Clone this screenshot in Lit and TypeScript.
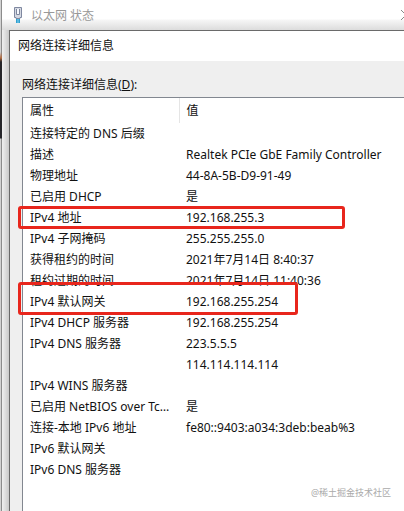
import { LitElement, html, css } from "lit";
import { customElement } from "lit/decorators.js";
import { classMap } from "lit/directives/class-map.js";

interface Row {
  name: string;
  value: string;
  mark?: "wide" | "tall";
}

const ROWS: Row[] = [
  { name: "连接特定的 DNS 后缀", value: "" },
  { name: "描述", value: "Realtek PCIe GbE Family Controller" },
  { name: "物理地址", value: "44-8A-5B-D9-91-49" },
  { name: "已启用 DHCP", value: "是" },
  { name: "IPv4 地址", value: "192.168.255.3", mark: "wide" },
  { name: "IPv4 子网掩码", value: "255.255.255.0" },
  { name: "获得租约的时间", value: "2021年7月14日 8:40:37" },
  { name: "租约过期的时间", value: "2021年7月14日 11:40:36" },
  { name: "IPv4 默认网关", value: "192.168.255.254", mark: "tall" },
  { name: "IPv4 DHCP 服务器", value: "192.168.255.254" },
  { name: "IPv4 DNS 服务器", value: "223.5.5.5" },
  { name: "", value: "114.114.114.114" },
  { name: "IPv4 WINS 服务器", value: "" },
  { name: "已启用 NetBIOS over Tcpip", value: "是" },
  { name: "连接-本地 IPv6 地址", value: "fe80::9403:a034:3deb:beab%3" },
  { name: "IPv6 默认网关", value: "" },
  { name: "IPv6 DNS 服务器", value: "" },
];

@customElement("app-root")
export class AppRoot extends LitElement {
  static styles = css`
    :host {
      position: relative;
      display: flex;
      min-height: 100vh;
      overflow: hidden;
      background: #fff;
      color: #111;
      font: 12px/21px "Noto Sans", "Noto Sans CJK SC", sans-serif;
    }
    .desktop {
      flex: none;
      width: 2px;
      background:
        linear-gradient(transparent 52px, #b06a40 58px, #26262a 62px 138px, transparent 139px),
        linear-gradient(90deg, #d2d2d2 1px, #8c8c8c 1px);
    }
    .status {
      flex: 1;
      min-width: 0;
      display: flex;
      flex-direction: column;
      background: linear-gradient(90deg, #f0f0f0, #c4c4c4 8px);
    }
    .titlebar {
      display: flex;
      align-items: center;
      height: 30px;
      padding-left: 10px;
      background: linear-gradient(#fff 19px, #f6f6f6 20px, #dcdcdc);
      color: #999;
    }
    .titlebar h1 {
      flex: 1;
    }
    .port {
      width: 12px;
      height: 18px;
      margin-right: 7px;
    }
    .close {
      flex: none;
      width: 12px;
      height: 20px;
      margin-right: -8px;
      padding: 0;
      border: 0;
      background: none;
    }
    .close svg {
      display: block;
    }
    h1,
    h2 {
      margin: 0;
      font: inherit;
    }
    .dialog {
      flex: 1;
      display: flex;
      flex-direction: column;
      margin-left: 7px;
      border: solid #6a6a6a;
      border-width: 1px 0 0 1px;
      background: #efefef;
    }
    .dialog h2 {
      height: 30px;
      padding-left: 8px;
      background: #fff;
      line-height: 30px;
    }
    .caption {
      padding: 13px 0 2px 12px;
    }
    .list {
      flex: 1;
      margin-left: 12px;
      border: solid #828790;
      border-width: 1px 0 0 1px;
      background: #fff;
    }
    table {
      width: 100%;
      table-layout: fixed;
      border-collapse: collapse;
    }
    .name {
      width: 156px;
    }
    th,
    td {
      height: 21px;
      padding: 0 0 0 7px;
      text-align: left;
      font-weight: 400;
      white-space: nowrap;
    }
    th {
      height: 25px;
    }
    th:first-child {
      border-right: 1px solid #e5e5e5;
    }
    td:first-child {
      overflow: hidden;
      text-overflow: ellipsis;
      padding-right: 3px;
    }
    .marked td:first-child {
      position: relative;
      overflow: visible;
    }
    .box {
      position: absolute;
      left: -5px;
      bottom: -1px;
      width: 321px;
      height: 17px;
      border: 3px solid #e8261c;
      border-radius: 3px;
      pointer-events: none;
    }
    .tall .box {
      bottom: -3px;
      width: 274px;
      height: 27px;
    }
    .watermark {
      position: absolute;
      right: 13px;
      bottom: 9px;
      color: #aaa;
      font-size: 9px;
      line-height: 18px;
    }
  `;

  private row(r: Row) {
    return html`<tr class=${classMap({ marked: !!r.mark, tall: r.mark === "tall" })}>
      <td>${r.name}${r.mark ? html`<span class="box"></span>` : ""}</td>
      <td>${r.value}</td>
    </tr>`;
  }

  render() {
    return html`
      <div class="desktop"></div>
      <div class="status">
        <header class="titlebar">
          <svg class="port" viewBox="0 0 12 18" aria-hidden="true">
            <path d="M2.5 1.5h7v10h-1.500v1h-4v-1h-1.500z" fill="#d4d8e2" stroke="#7f88a0" />
            <path d="M4.500 3v5.500h3V3" fill="#f5f7fc" stroke="#7d869d" />
            <path d="M4 13h4v4H4z" fill="#2f9fd0" />
            <path d="M6 13v4" stroke="#86d2ee" />
          </svg>
          <h1>以太网 状态</h1>
          <button class="close" aria-label="关闭">
            <svg width="12" height="20" viewBox="0 0 12 20"><path d="M1 5l10 10M11 5L1 15" stroke="#888" /></svg>
          </button>
        </header>
        <main class="dialog">
          <h2>网络连接详细信息</h2>
          <div class="caption" id="caption">网络连接详细信息(<u>D</u>):</div>
          <div class="list">
            <table aria-labelledby="caption">
              <colgroup><col class="name" /><col /></colgroup>
              <thead><tr><th>属性</th><th>值</th></tr></thead>
              <tbody>${ROWS.map((r) => this.row(r))}</tbody>
            </table>
          </div>
        </main>
      </div>
      <div class="watermark">@稀土掘金技术社区</div>
    `;
  }
}
